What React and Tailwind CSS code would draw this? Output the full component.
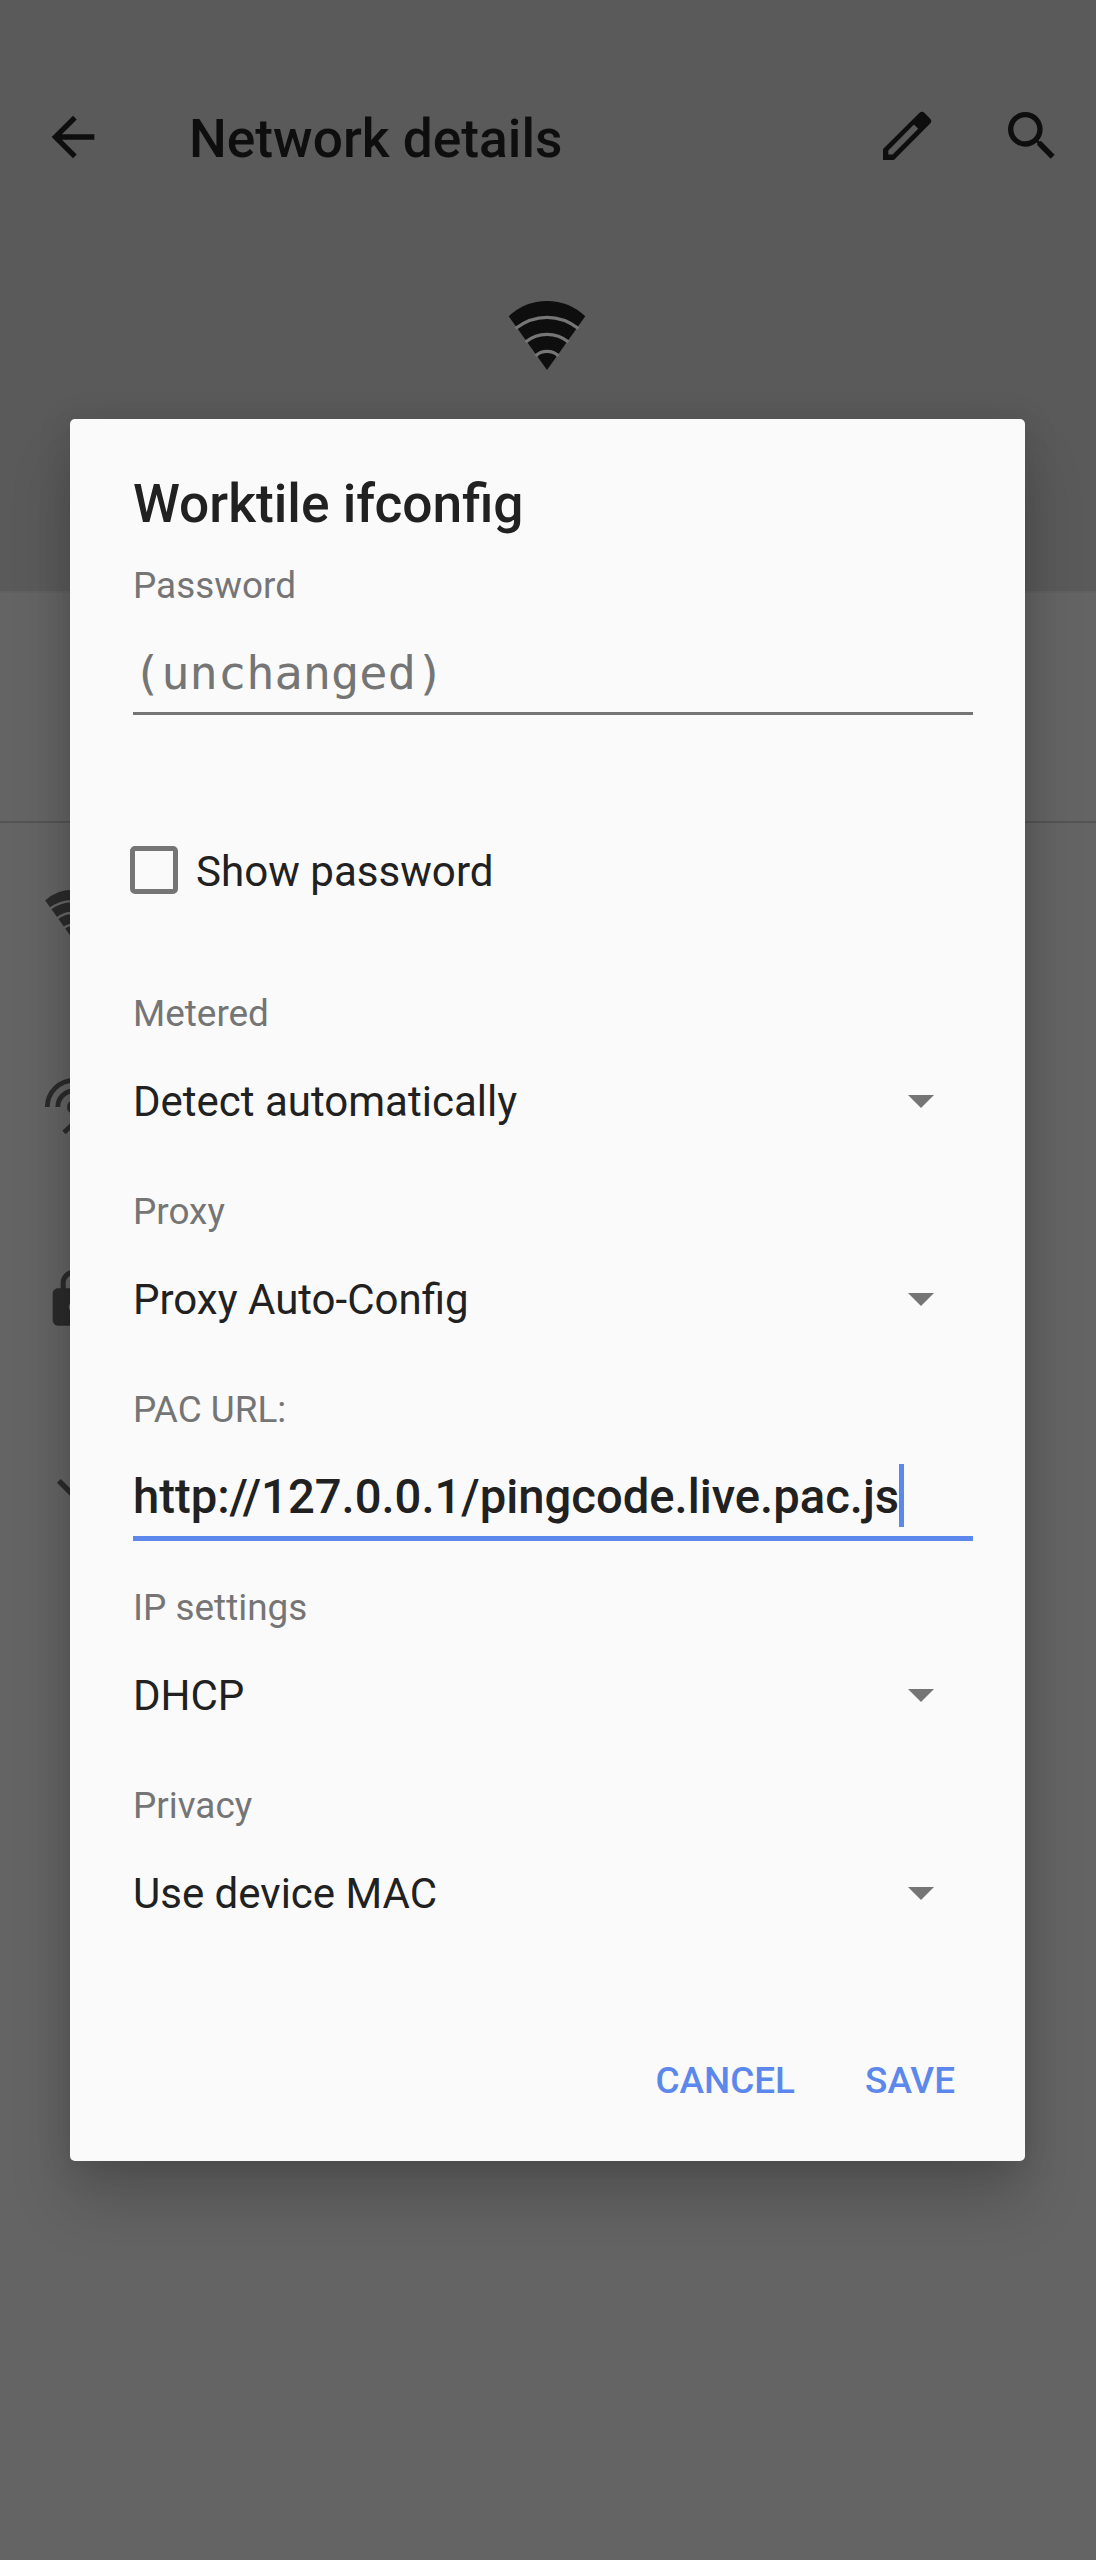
import { MdArrowBack, MdExpandMore, MdLock, MdSearch } from "react-icons/md";

function EditIcon() {
  return (
    <svg viewBox="0 0 24 24" className="size-16" fill="currentColor" fillRule="evenodd">
      <path d="M3 16.900V21h4.100L20.600 7.400a1.400 1.400 0 0 0 0-2l-2-2a1.400 1.400 0 0 0-2 0ZM5 18.900v-1.500l9.600-9.700 1.600 1.600L6.600 18.900Z" />
    </svg>
  );
}

function WifiIcon({ className, gap }) {
  return (
    <svg viewBox="0 0 78 70" className={className}>
      <path d="M39 70L.7 16.3Q17 1 39 1T77.3 16.3Z" fill="currentColor" />
      <g fill="none" stroke={gap} strokeWidth="3.3">
        <path d="M7.5 28.5Q22 17.3 39 17.3T70.5 28.5" />
        <path d="M17.5 42Q27 34.3 39 34.3T60.5 42" />
        <path d="M27.5 56Q32 51.3 39 51.3T50.5 56" />
      </g>
    </svg>
  );
}

function SignalIcon() {
  return (
    <svg viewBox="0 0 64 64" className="size-16" fill="none" stroke="currentColor" strokeWidth="4.8">
      <path d="M5.3 35a26.7 26.7 0 0 1 53.4 0M15.8 35a16.2 16.2 0 0 1 32.4 0" />
      <circle cx="32" cy="35" r="7" fill="currentColor" stroke="none" />
      <path d="M22 60.500L32 51L42 60.500" />
    </svg>
  );
}

function Label({ children, className = "" }) {
  return <div className={`h-11 text-[36.9px] leading-[46px] text-[#757575] ${className}`}>{children}</div>;
}

function Select({ label, value }) {
  return (
    <div className="mb-16">
      <Label>{label}</Label>
      <div className="mt-[42px] flex h-12 items-center justify-between pr-[39px] text-[42px] leading-[48px]">
        <span className="pt-[2px]">{value}</span>
        <svg viewBox="0 0 26 13" className="h-[13px] w-[26px] text-[#757575]" fill="currentColor">
          <path d="M0 0H26L13 13Z" />
        </svg>
      </div>
    </div>
  );
}

function Backdrop() {
  return (
    <div className="flex h-full flex-col bg-[#646464] text-[#2b2b2b]">
      <div className="flex h-[591px] flex-col bg-[#5a5a5a] text-[#0e0e0e]">
        <header className="mt-[104px] flex h-16 items-center pr-8 pl-[41px]">
          <MdArrowBack className="mt-px size-16" />
          <h1 className="ml-[84px] flex-1 pt-[6px] text-[53.3px] leading-[64px] font-medium">Network details</h1>
          <EditIcon />
          <MdSearch className="ml-[61px] size-16" />
        </header>
        <WifiIcon className="mt-[132px] mr-[2px] h-[70px] w-[78px] self-center" gap="#767676" />
      </div>
      <div className="h-[232px] border-t-2 border-b-2 border-t-[#606060] border-b-[#545454]" />
      <div className="flex flex-col pl-[42px]">
        <WifiIcon className="mt-[66px] h-[49px] w-[60px]" gap="#686868" />
        <div className="mt-[134px]">
          <SignalIcon />
        </div>
        <MdLock className="mt-[131px] size-16" />
        <MdExpandMore className="mt-[125px] -ml-px size-16" />
      </div>
    </div>
  );
}

export default function App() {
  return (
    <div className="relative h-[2560px] w-[1096px] overflow-hidden font-['Roboto',sans-serif]">
      <Backdrop />
      <div className="absolute inset-0 flex items-start pt-[419px] pl-[70px]">
        <section
          role="dialog"
          className="flex h-[1742px] w-[955px] flex-col rounded-[5px] bg-[#fafafa] pt-[53px] pr-[52px] pl-[63px] text-[#212121] shadow-[0_42px_60px_rgba(0,0,0,0.17),0_4px_34px_rgba(0,0,0,0.13)]"
        >
          <h2 className="h-16 text-[53.3px] leading-[64px] font-medium">Worktile ifconfig</h2>
          <Label className="mt-[27px]">Password</Label>
          <div className="border-b-3 border-[#757575] pt-[38px] pb-[11px] font-['DejaVu_Sans_Mono',monospace] text-[47px] leading-[56px] text-[#757575]">
            (unchanged)
          </div>
          <div className="mt-[131px] -ml-[3px] flex h-12 items-center gap-[18px] text-[42.1px] leading-[48px]">
            <span className="size-12 rounded-[5px] border-5 border-[#757575]" />
            <span className="pt-[3px]">Show password</span>
          </div>
          <div className="mt-[97px]">
            <Select label="Metered" value="Detect automatically" />
            <Select label="Proxy" value="Proxy Auto-Config" />
            <Label>PAC URL:</Label>
            <div className="mt-[33px] mb-[44px] flex border-b-5 border-[#5c88ec] pb-2 text-[47.2px] leading-[64px] font-medium">
              <span className="-mb-px pt-px">http://127.0.0.1/pingcode.live.pac.js</span>
              <span className="h-[63px] w-[5px] bg-[#5c88ec]" />
            </div>
            <Select label="IP settings" value="DHCP" />
            <Select label="Privacy" value="Use device MAC" />
          </div>
          <div className="mt-[78px] flex justify-end gap-[70px] pr-[18px] text-[36.9px] leading-[44px] font-medium text-[#5c88ec]">
            <button>CANCEL</button>
            <button>SAVE</button>
          </div>
        </section>
      </div>
    </div>
  );
}
